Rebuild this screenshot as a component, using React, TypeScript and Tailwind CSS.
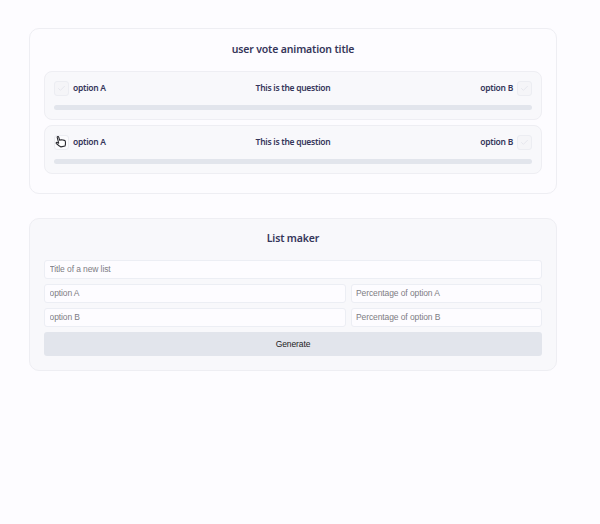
import { Check } from "lucide-react"

function Box({ faded }: { faded?: boolean }) {
  return (
    <div className={`w-[15px] h-[15px] shrink-0 rounded-[3px] border border-[#ecedf2] flex items-center justify-center ${faded ? "bg-[#fbfbfd]" : "bg-[#f5f5f8]"}`}>
      {!faded && <Check className="w-[9px] h-[9px] text-[#e0e2e9]" strokeWidth={2} />}
    </div>
  )
}

function Pointer() {
  return (
    <svg className="absolute left-[1px] top-0 -rotate-12" width="12" height="14" viewBox="0 0 13 15" fill="none">
      <path
        d="M3.5 1.8c0-1 1.6-1 1.7 0l.3 3.6 1-.2 1.2.2 1.3.4 1.4.7c.7.5 1 1.2.8 2l-.5 2.4-.9 1.8H5.4L3.6 11 1.2 8.2c-.5-.7.2-1.5 1-1.1l1.6 1.1-.3-6.4z"
        fill="#ffffff"
        stroke="#2a2a30"
        strokeWidth="1.2"
        strokeLinejoin="round"
      />
    </svg>
  )
}

function VoteRow({ cursor }: { cursor?: boolean }) {
  return (
    <div className="h-[49px] rounded-lg border border-[#eeeef3] bg-[#f8f8fb] px-[9px] pt-[8.5px]">
      <div className="flex items-center justify-between h-[16px] text-[8.5px] tracking-[-0.28px] font-semibold text-[#35365a]">
        <div className="flex items-center gap-[4px] w-[130px]">
          <div className="relative">
            <Box faded={cursor} />
            {cursor && <Pointer />}
          </div>
          <span>option A</span>
        </div>
        <span>This is the question</span>
        <div className="flex items-center justify-end gap-[4px] w-[130px]">
          <span>option B</span>
          <Box />
        </div>
      </div>
      <div className="mt-[8.5px] h-[4.5px] rounded-full bg-[#e2e5ec]" />
    </div>
  )
}

function Field({ placeholder, className }: { placeholder: string; className?: string }) {
  return (
    <input
      placeholder={placeholder}
      className={`h-[18.5px] min-w-0 rounded-[3px] border border-[#eceef4] bg-[#fdfcff] px-[4.5px] text-[8.5px] tracking-[-0.1px] outline-none placeholder:text-[#7d7d84] ${className ?? ""}`}
    />
  )
}

export default function App() {
  return (
    <div className="min-h-[524px] bg-[#fdfcff] px-[29px] pt-[28px] font-['Noto_Sans',sans-serif]">
      <div className="w-[528px] h-[165.5px] rounded-[10px] border border-[#eeeef3] px-[14px]">
        <h2 className="pt-[12px] h-[42px] text-center text-[10.5px] tracking-[-0.15px] leading-[16px] font-semibold text-[#35365a]">
          user vote animation title
        </h2>
        <div className="flex flex-col gap-[5px]">
          <VoteRow />
          <VoteRow cursor />
        </div>
      </div>

      <div className="mt-[24.5px] w-[528px] h-[152.5px] rounded-[10px] border border-[#eeeef3] bg-[#f8f8fb] px-[14px]">
        <h2 className="pt-[11px] h-[41px] text-center text-[10.5px] tracking-[-0.15px] leading-[16px] font-semibold text-[#35365a]">
          List maker
        </h2>
        <div className="flex flex-col gap-[5.5px] font-['Liberation_Sans',sans-serif]">
          <Field placeholder="Title of a new list" className="w-full" />
          <div className="flex gap-[5px]">
            <Field placeholder="option A" className="flex-1" />
            <Field placeholder="Percentage of option A" className="w-[191.5px]" />
          </div>
          <div className="flex gap-[5px]">
            <Field placeholder="option B" className="flex-1" />
            <Field placeholder="Percentage of option B" className="w-[191.5px]" />
          </div>
          <button className="h-[23.5px] rounded-[3px] bg-[#e2e5ec] pt-[1px] text-[8.5px] tracking-[-0.1px] text-[#1c1c22]">Generate</button>
        </div>
      </div>
    </div>
  )
}
